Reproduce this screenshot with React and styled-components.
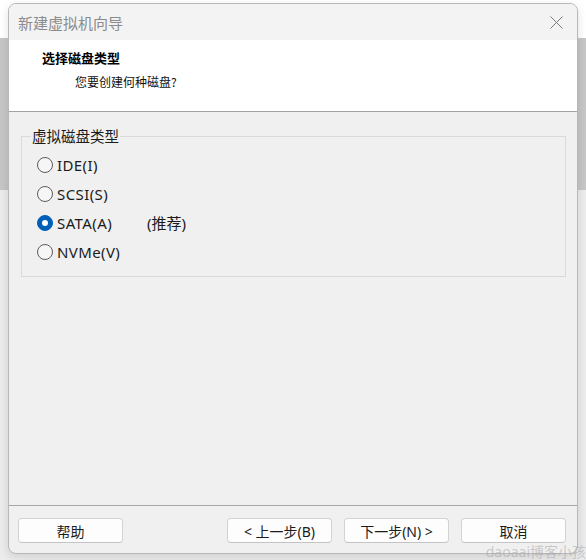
import React, { useState } from 'react';
import styled, { createGlobalStyle } from 'styled-components';

const GlobalStyle = createGlobalStyle`
  html, body {
    margin: 0;
    padding: 0;
  }
  body {
    font-family: "Noto Sans", "Noto Sans CJK SC", sans-serif;
    color: #1b1b1b;
  }
`;

const Page = styled.div`
  position: relative;
  width: 586px;
  height: 560px;
  overflow: hidden;
  padding-top: 3px;
  box-sizing: border-box;
  background: linear-gradient(
    to bottom,
    #ffffff 0 38px,
    #c6c6c6 38px 190px,
    #ececec 190px
  );
`;

const Window = styled.div`
  box-sizing: border-box;
  width: 570px;
  height: 551px;
  margin-left: 8px;
  border: 1px solid #b8b8b8;
  border-radius: 8px;
  overflow: hidden;
  display: flex;
  flex-direction: column;
  background: #f0f0f0;
  box-shadow: 0 3px 10px rgba(0, 0, 0, 0.12);
`;

const TitleBar = styled.div`
  height: 36px;
  flex: none;
  display: flex;
  align-items: center;
  justify-content: space-between;
  padding: 0 14px 0 9px;
  background: #f3f3f3;
`;

const Title = styled.div`
  font-family: "Noto Sans CJK SC", sans-serif;
  font-size: 15px;
  color: #8b8b8b;
`;

const CloseButton = styled.button`
  width: 14px;
  height: 14px;
  padding: 0;
  border: none;
  background: none;
  display: flex;
  align-items: center;
  justify-content: center;
`;

const Header = styled.div`
  height: 72px;
  flex: none;
  box-sizing: border-box;
  padding: 9px 0 0 33px;
  background: #ffffff;
  border-bottom: 1px solid #a3a3a3;
`;

const HeaderTitle = styled.div`
  font-family: "Noto Sans CJK SC", sans-serif;
  font-size: 13px;
  font-weight: 700;
  line-height: 18px;
  color: #000;
`;

const HeaderSub = styled.div`
  font-family: "Noto Sans CJK SC", sans-serif;
  font-size: 12px;
  line-height: 18px;
  margin: 6px 0 0 33px;
  color: #111;
`;

const Body = styled.div`
  flex: 1;
  padding: 15px 11px 0 12px;
`;

const Group = styled.fieldset`
  margin: 0;
  padding: 5px 12px 10px 15px;
  border: 1px solid #dadada;
  border-radius: 0;
  display: flex;
  flex-direction: column;
`;

const Legend = styled.legend`
  font-family: "Noto Sans CJK SC", sans-serif;
  font-size: 14.5px;
  line-height: 18px;
  padding: 0 1px;
  margin-left: -6px;
  color: #1b1b1b;
`;

const Option = styled.label`
  height: 29px;
  display: flex;
  align-items: center;
  gap: 4px;
  font-size: 15px;
  letter-spacing: 0.4px;
  cursor: default;
`;

const Dot = styled.span`
  box-sizing: border-box;
  width: 16px;
  height: 16px;
  border-radius: 50%;
  flex: none;
  display: flex;
  align-items: center;
  justify-content: center;
  border: 1px solid ${(p) => (p.$on ? '#005fb8' : '#5c5c5c')};
  background: ${(p) => (p.$on ? '#005fb8' : '#f6f6f6')};

  &::after {
    content: '';
    width: 6px;
    height: 6px;
    border-radius: 50%;
    background: ${(p) => (p.$on ? '#ffffff' : 'transparent')};
  }
`;

const OptionText = styled.span`
  width: ${(p) => (p.$wide ? '86px' : 'auto')};
`;

const Note = styled.span`
  font-family: "Noto Sans", "Noto Sans CJK SC", sans-serif;
  font-size: 15px;
  letter-spacing: 0;
`;

const Footer = styled.div`
  height: 48px;
  flex: none;
  box-sizing: border-box;
  border-top: 1px solid #a8a8a8;
  padding: 12px 11px 0 9px;
  display: flex;
  align-items: flex-start;
  gap: 12px;
`;

const Spacer = styled.div`
  flex: 1;
`;

const Button = styled.button`
  box-sizing: border-box;
  width: 105px;
  height: 25px;
  padding: 0;
  border: 1px solid #d3d3d3;
  border-bottom-color: #c4c4c4;
  border-radius: 4px;
  background: #fdfdfd;
  font-family: "Noto Sans", "Noto Sans CJK SC", sans-serif;
  font-size: 14px;
  color: #1b1b1b;
`;

const Watermark = styled.div`
  position: absolute;
  right: 0;
  bottom: -1px;
  font-family: "Noto Sans", "Noto Sans CJK SC", sans-serif;
  font-size: 14px;
  color: rgba(160, 160, 160, 0.5);
  white-space: nowrap;
  pointer-events: none;
`;

const types = [
  { id: 'ide', label: 'IDE(I)' },
  { id: 'scsi', label: 'SCSI(S)' },
  { id: 'sata', label: 'SATA(A)', note: '(推荐)' },
  { id: 'nvme', label: 'NVMe(V)' },
];

const App = () => {
  const [type, setType] = useState('sata');

  return (
    <Page>
      <GlobalStyle />
      <Window>
        <TitleBar>
          <Title>新建虚拟机向导</Title>
          <CloseButton aria-label="关闭">
            <svg width="13" height="13" viewBox="0 0 13 13">
              <path d="M0.5 0.5L12.5 12.5M12.5 0.5L0.5 12.5" stroke="#7a7a7a" strokeWidth="1" fill="none" />
            </svg>
          </CloseButton>
        </TitleBar>
        <Header>
          <HeaderTitle>选择磁盘类型</HeaderTitle>
          <HeaderSub>您要创建何种磁盘?</HeaderSub>
        </Header>
        <Body>
          <Group>
            <Legend>虚拟磁盘类型</Legend>
            {types.map((t) => (
              <Option key={t.id} onClick={() => setType(t.id)}>
                <Dot $on={type === t.id} />
                <OptionText $wide={!!t.note}>{t.label}</OptionText>
                {t.note && <Note>{t.note}</Note>}
              </Option>
            ))}
          </Group>
        </Body>
        <Footer>
          <Button>帮助</Button>
          <Spacer />
          <Button>&lt; 上一步(B)</Button>
          <Button>下一步(N) &gt;</Button>
          <Button>取消</Button>
        </Footer>
      </Window>
      <Watermark>daoaai博客小孩</Watermark>
    </Page>
  );
};

export default App;
